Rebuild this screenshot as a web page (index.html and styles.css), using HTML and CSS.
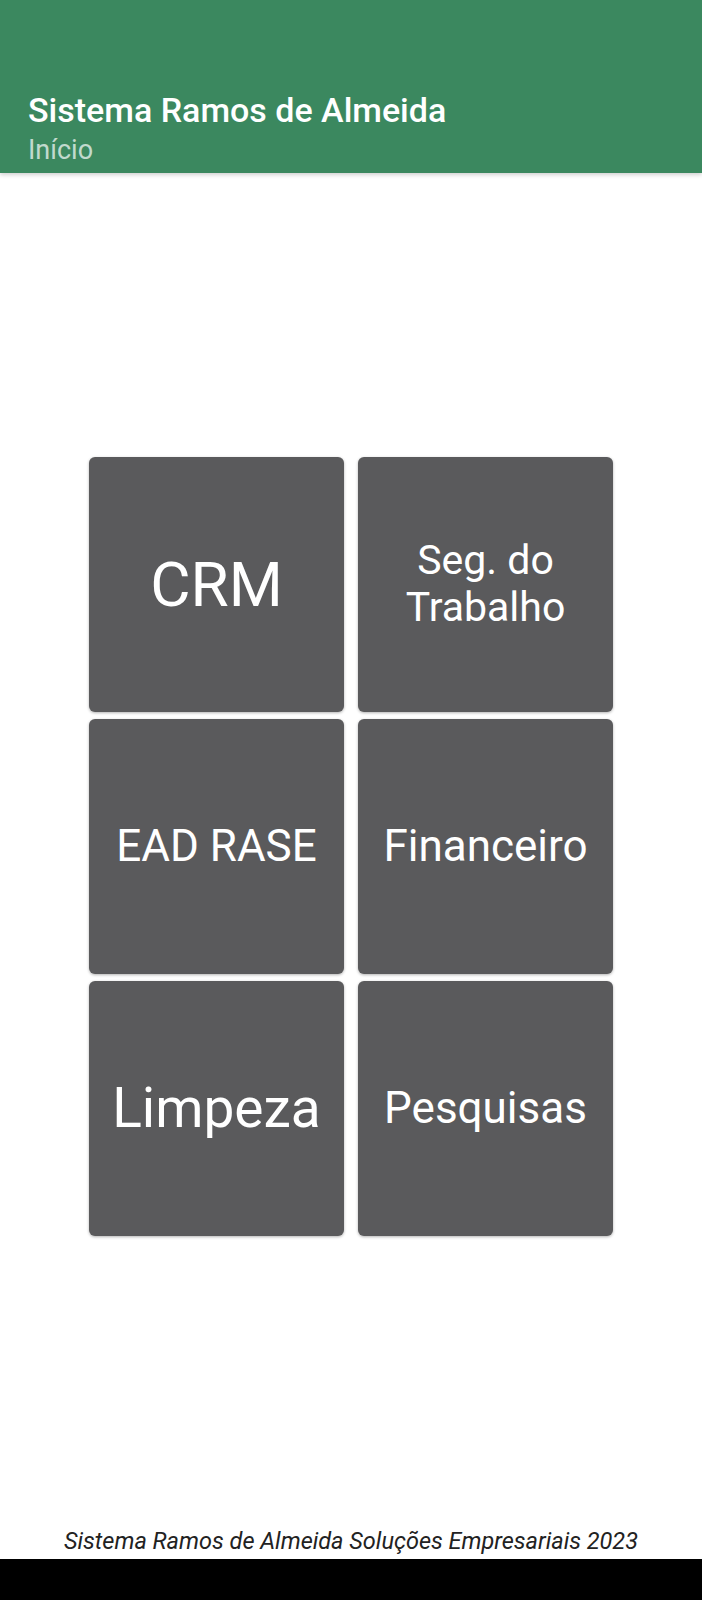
FILE: index.html
```html
<!DOCTYPE html>
<html lang="pt-BR">
<head>
  <meta charset="UTF-8" />
  <meta name="viewport" content="width=device-width, initial-scale=1.0"/>
  <title>Sistema Ramos de Almeida</title>
  <link rel="stylesheet" href="styles.css">
</head>
<body>

  <header class="appbar">
    <h1 class="appbar-title">Sistema Ramos de Almeida</h1>
    <div class="appbar-sub">Início</div>
  </header>

  <main class="home">
    <div class="menu">
      <a class="tile tile-big" href="#">CRM</a>
      <a class="tile tile-two" href="#">Seg. do<br>Trabalho</a>
      <a class="tile" href="#">EAD RASE</a>
      <a class="tile" href="#">Financeiro</a>
      <a class="tile tile-big2" href="#">Limpeza</a>
      <a class="tile" href="#">Pesquisas</a>
    </div>
  </main>

  <footer class="foot">Sistema Ramos de Almeida Soluções Empresariais 2023</footer>
  <div class="navbar"></div>

</body>
</html>
```

FILE: styles.css
```css
body {
  font-family: Roboto, "Liberation Sans", sans-serif;
  background: #fff;
  margin: 0;
  min-height: 1600px;
  display: flex;
  flex-direction: column;
}
.appbar {
  height: 173px;
  box-sizing: border-box;
  background: #3b885f;
  padding: 0 0 5px 28px;
  display: flex;
  flex-direction: column;
  justify-content: flex-end;
  box-shadow: 0 2px 4px rgba(0,0,0,0.18);
  position: relative;
  z-index: 1;
}
.appbar-title {
  margin: 0;
  font-size: 34px;
  font-weight: 500;
  color: #fff;
  line-height: 44px;
}
.appbar-sub {
  font-size: 27px;
  color: rgba(255,255,255,0.7);
  line-height: 36px;
}
.home {
  flex: 1;
  display: flex;
  align-items: center;
  justify-content: center;
}
.menu {
  display: grid;
  grid-template-columns: 255px 255px;
  grid-auto-rows: 255px;
  column-gap: 14px;
  row-gap: 7px;
}
.tile {
  background: #5a5a5c;
  border-radius: 6px;
  box-shadow: 0 1px 3px rgba(0,0,0,0.3);
  color: #fff;
  text-decoration: none;
  display: flex;
  align-items: center;
  justify-content: center;
  text-align: center;
  font-size: 44px;
}
.tile-big {
  font-size: 62px;
}
.tile-two {
  font-size: 41px;
  line-height: 47px;
}
.tile-big2 {
  font-size: 55px;
}
.foot {
  height: 40px;
  line-height: 44px;
  text-align: center;
  font-style: italic;
  font-size: 23.5px;
  color: #222;
}
.navbar {
  height: 41px;
  background: #000;
}
```
